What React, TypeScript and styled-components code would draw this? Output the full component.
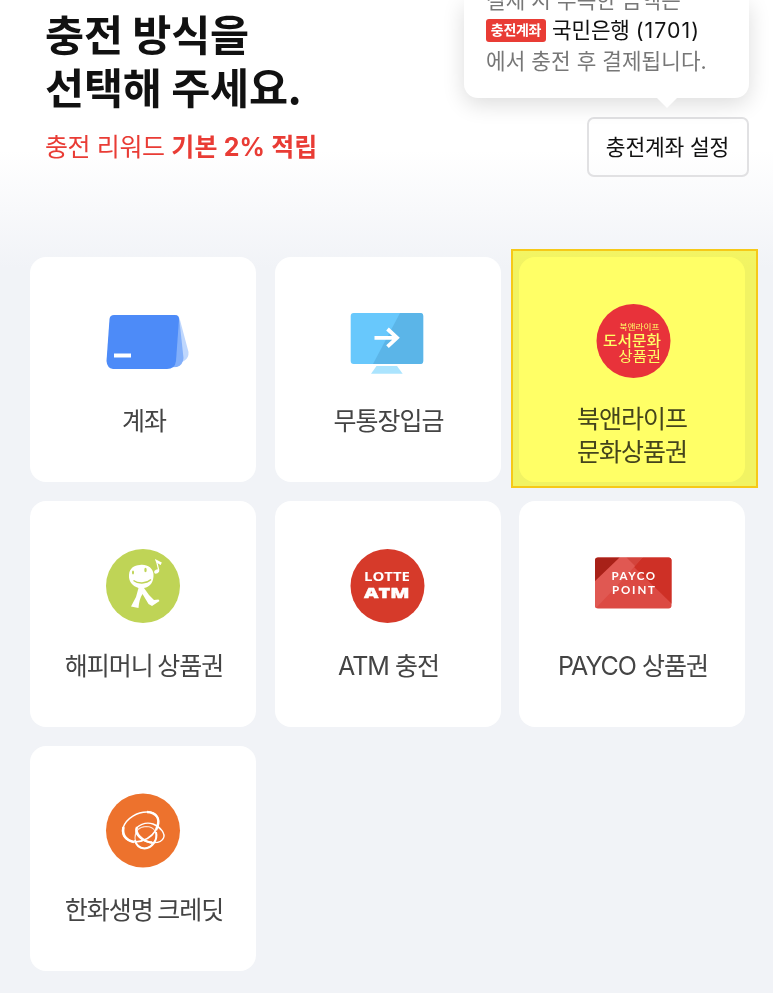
import React from "react";
import styled, { createGlobalStyle } from "styled-components";

const Global = createGlobalStyle`
  * { box-sizing: border-box; }
  html, body { margin: 0; padding: 0; overflow: hidden; background: #f1f3f7; }
  body { font-family: "Noto Sans CJK KR", "Noto Sans", sans-serif; }
`;

const Page = styled.main`
  width: 773px;
  height: 993px;
  overflow: hidden;
  background: linear-gradient(#fff 0, #fff 150px, #f1f3f7 268px);
`;

const Header = styled.header`
  height: 256.7px;
  display: flex;
  justify-content: space-between;
  padding: 0 24.5px 0 45px;
`;

const Intro = styled.div`
  padding-top: 5.5px;
`;

const Title = styled.h1`
  margin: 0;
  font-size: 42.5px;
  font-weight: 700;
  line-height: 53.5px;
  letter-spacing: -0.2px;
  color: #111;
  white-space: nowrap;
`;

const Reward = styled.p`
  margin: 16px 0 0;
  font-family: "Inter", "Noto Sans CJK KR", sans-serif;
  font-size: 25px;
  line-height: 36px;
  letter-spacing: -0.4px;
  color: #e93c35;
  white-space: nowrap;

  b { letter-spacing: 0.15px; }
`;

const Account = styled.div`
  display: flex;
  flex-direction: column;
  align-items: flex-end;
`;

const Bubble = styled.div`
  position: relative;
  width: 285px;
  height: 97.5px;
  padding-left: 22.5px;
  display: flex;
  flex-direction: column;
  border-radius: 0 0 14px 14px;
  background: #fff;
  box-shadow: 0 6px 22px rgba(0, 0, 0, 0.14);

  &::after {
    content: "";
    position: absolute;
    top: 97px;
    left: 192.5px;
    border: 11.5px solid transparent;
    border-top-color: #fff;
    border-bottom: 0;
  }
`;

const BubbleLine = styled.div<{ $strong?: boolean; $first?: boolean }>`
  height: ${(p) => (p.$first ? "28px" : "31px")};
  margin-top: ${(p) => (p.$first ? "-13.5px" : "0")};
  display: flex;
  align-items: center;
  font-family: "Inter", "Noto Sans CJK KR", sans-serif;
  font-size: 21.3px;
  line-height: 31px;
  letter-spacing: ${(p) => (p.$strong ? "-0.15px" : "0.05px")};
  color: ${(p) => (p.$strong ? "#111" : "#777")};
  white-space: pre;
`;

const AccountNumber = styled.span`
  letter-spacing: 1.1px;
`;

const Badge = styled.span`
  width: 60px;
  height: 23px;
  margin-right: 6px;
  border-radius: 3px;
  background: #e93c35;
  color: #fff;
  font-size: 14px;
  font-weight: 700;
  line-height: 22px;
  letter-spacing: -0.3px;
  text-align: center;
`;

const SettingButton = styled.button`
  width: 162px;
  height: 60px;
  margin-top: 19px;
  padding: 0;
  border: 2px solid #e1e1e3;
  border-radius: 7px;
  background: transparent;
  color: #111;
  font: 400 21.5px/56px "Inter", "Noto Sans CJK KR", sans-serif;
  letter-spacing: -0.2px;
  white-space: nowrap;
`;

const Grid = styled.section`
  display: grid;
  grid-template-columns: repeat(3, 226px);
  grid-auto-rows: 225.5px;
  gap: 19px 18.5px;
  padding-left: 30px;
`;

const Tile = styled.article`
  position: relative;
  display: flex;
  flex-direction: column;
  align-items: center;
  padding-top: 39px;
  border-radius: 16px;
  background: #fff;
`;

const Icon = styled.svg<{ $dx?: number; $dy?: number }>`
  display: block;
  flex: none;
  width: 110px;
  height: 90px;
  margin: ${(p) => p.$dy ?? 0}px 0 ${(p) => -(p.$dy ?? 0)}px ${(p) => (p.$dx ?? 2) * 2}px;
`;

const Label = styled.div<{ $double?: boolean; $latin?: boolean }>`
  margin: ${(p) => (p.$double ? "15.5px" : p.$latin ? "19.5px" : "17.5px")} 0 0 ${(p) => (p.$double ? 0 : 2)}px;
  font-family: ${(p) => (p.$latin ? '"Inter", ' : "")}"Noto Sans CJK KR", sans-serif;
  font-size: 25px;
  line-height: 33px;
  letter-spacing: -1px;
  text-align: center;
  color: #444;
  white-space: pre;
`;

const Highlight = styled.div`
  position: absolute;
  top: -7.7px;
  left: -8.5px;
  width: 247px;
  height: 238.5px;
  background: #ffff66;
  mix-blend-mode: multiply;
`;

const HighlightBorder = styled.div`
  position: absolute;
  top: -7.7px;
  left: -8.5px;
  width: 247px;
  height: 238.5px;
  border: 2px solid #f6c918;
`;

const AccountIcon = () => (
  <Icon viewBox="0 0 110 90" $dy={4}>
    <path d="M86 15 Q89 16 90 20L98.5 52Q99 58 94 61L81 67Z" fill="#bfd7fd" />
    <path d="M84 15 Q89 17 89.5 21L93.5 58Q93 65 87 67L76 67.5Z" fill="#82affa" />
    <path d="M24 15H85Q89 15 89 19L86 61Q85 69 77 69H23Q17 68 16.5 61L19.5 19Q20 15 24 15Z" fill="#4d8bf8" />
    <path d="M24 53.5H41V57.5H24Z" fill="#fff" />
  </Icon>
);

const MonitorIcon = () => (
  <Icon viewBox="0 0 110 90" $dy={4}>
    <rect x="15.7" y="13" width="72.5" height="51" rx="3" fill="#68c8fc" />
    <path d="M65 13H85.2Q88.2 13 88.2 16V61Q88.2 64 85.2 64H38Z" fill="#5bb5e8" />
    <path d="M41.5 66H62L67.7 73.7H36Z" fill="#abe4fe" />
    <path d="M39.5 37.8H62M52.5 29L62 37.8L52.5 46.6" fill="none" stroke="#fff" strokeWidth="3.8" />
  </Icon>
);

const BookIcon = () => (
  <Icon viewBox="0 0 110 90" fontFamily="Noto Sans CJK KR" fill="#fff" $dx={4.3} $dy={0.5}>
    <circle cx="52.5" cy="45" r="37" fill="#e83291" />
    <text x="38.5" y="34" fontSize="8" textLength="40" lengthAdjust="spacingAndGlyphs">북앤라이프</text>
    <text x="22" y="49.5" fontSize="14.5" fontWeight="500" textLength="58" lengthAdjust="spacingAndGlyphs">도서문화</text>
    <text x="37.500" y="64.5" fontSize="13.5" textLength="42.5" lengthAdjust="spacingAndGlyphs">상품권</text>
  </Icon>
);

const HappyIcon = () => (
  <Icon viewBox="0 0 110 90" $dy={-0.5}>
    <circle cx="53" cy="46" r="37" fill="#bfd456" />
    <path d="M50 25C57 24 63 28 63.5 34C64 42 60 47 54 48L59 55L64 60L68.5 59.5L69.5 61L62 66L58.5 64L52.5 54C50 58 49 62 48.5 68L41 66.5L46 57L48.5 48C42 46 38.5 41 39 35C39.5 28 44 25.5 50 25Z" fill="#fff" />
    <ellipse cx="43" cy="32.5" rx="1" ry="2" fill="#bfd456" />
    <ellipse cx="55.5" cy="30" rx="1.2" ry="2.3" fill="#bfd456" />
    <path d="M43.5 40.5C48 44 56 44 61 39.5" fill="none" stroke="#bfd456" strokeWidth="1.3" />
    <ellipse cx="66.7" cy="31.5" rx="2.7" ry="1.9" fill="#fff" transform="rotate(-25 66.7 31.5)" />
    <path d="M68.8 30.5L66.5 21L71 24.3" fill="none" stroke="#fff" strokeWidth="1.2" />
    <path d="M65 19L71.8 22.5L70.5 25L66 22Z" fill="#fff" />
  </Icon>
);

const LotteIcon = () => (
  <Icon viewBox="0 0 110 90" fill="#fff" $dy={-0.5}>
    <circle cx="52.5" cy="46" r="37" fill="#d63a2a" />
    <text x="29" y="41.3" fontFamily="Open Sans" fontWeight="700" fontSize="11.7" textLength="46" lengthAdjust="spacingAndGlyphs">LOTTE</text>
    <text x="29" y="58" fontFamily="Open Sans" fontWeight="800" fontSize="14.5" stroke="#fff" strokeWidth=".4" textLength="45.5" lengthAdjust="spacingAndGlyphs">ATM</text>
  </Icon>
);

const PaycoIcon = () => (
  <Icon viewBox="0 0 110 90" $dx={3} $dy={-0.5}>
    <defs>
      <clipPath id="paycoCard"><rect x="15" y="17.5" width="76.5" height="51" rx="3" /></clipPath>
    </defs>
    <g clipPath="url(#paycoCard)">
      <path d="M15 17H92V69H15Z" fill="#dc4a43" />
      <path d="M54 27L63 17H92V64Z" fill="#ce3026" />
      <path d="M46 17H63L54 27Z" fill="#d3443c" />
      <path d="M40 17H46L55 26L35 48L15 69V41Z" fill="#e05852" />
      <path d="M15 17H40L15 41Z" fill="#a82118" />
    </g>
    <g fontFamily="Lato" fontSize="11.5" fontWeight="700" fill="#fff">
      <text x="31.5" y="40" textLength="43.5">PAYCO</text>
      <text x="32" y="53.5" textLength="43">POINT</text>
    </g>
  </Icon>
);

const HanwhaIcon = () => (
  <Icon viewBox="0 0 110 90">
    <circle cx="53" cy="45.5" r="37" fill="#ed722d" />
    <g fill="none" stroke="#fff">
      <path d="M45 57C35 56 31.5 50 33 43C36 33 48 26.5 58 27C68 27.5 71 36 66 45C61 53 54 56.5 45 57" strokeWidth="1.5" />
      <path d="M44 57C35 55 32 49 33.5 42" strokeWidth="2.6" />
      <path d="M57 27C67 27.5 70 34 67.5 41L66 45" strokeWidth="2.4" />
      <path d="M62 58C53 57 46 51 46 46C46 40 56 36.5 63 39C71 42 75.5 49 73.5 53C72 56.5 68 58 62 57.5" strokeWidth="1.4" />
      <path d="M47 42C44 48 53 57 62 57.5" strokeWidth="2.3" />
      <path d="M56 41.5C66 41.5 67.5 50 65.5 55C63 61 57 64 52 63C47 61.5 45 58 45 53C45 46 49 42 56 41.5" strokeWidth="1.1" opacity=".8" />
      <path d="M66 47C68 55 62 63 54.5 63.5C49 63 46 60 45 55" strokeWidth="2" />
    </g>
  </Icon>
);

const methods = [
  { label: "계좌", icon: <AccountIcon /> },
  { label: "무통장입금", icon: <MonitorIcon /> },
  { label: "북앤라이프\n문화상품권", icon: <BookIcon />, selected: true },
  { label: "해피머니 상품권", icon: <HappyIcon /> },
  { label: "ATM 충전", icon: <LotteIcon />, latin: true },
  { label: "PAYCO 상품권", icon: <PaycoIcon />, latin: true },
  { label: "한화생명 크레딧", icon: <HanwhaIcon /> },
];

export default function App() {
  return (
    <>
      <Global />
      <Page>
        <Header>
          <Intro>
            <Title>충전 방식을<br />선택해 주세요.</Title>
            <Reward>충전 리워드 <b>기본 2% 적립</b></Reward>
          </Intro>
          <Account>
            <Bubble>
              <BubbleLine $first>결제 시 부족한 금액은</BubbleLine>
              <BubbleLine $strong><Badge>충전계좌</Badge>국민은행 <AccountNumber>(1701)</AccountNumber></BubbleLine>
              <BubbleLine>에서 충전 후 결제됩니다.</BubbleLine>
            </Bubble>
            <SettingButton>충전계좌 설정</SettingButton>
          </Account>
        </Header>
        <Grid>
          {methods.map((m) => (
            <Tile key={m.label}>
              {m.icon}
              <Label $double={m.selected} $latin={m.latin}>{m.label}</Label>
              {m.selected && <><Highlight /><HighlightBorder /></>}
            </Tile>
          ))}
        </Grid>
      </Page>
    </>
  );
}
